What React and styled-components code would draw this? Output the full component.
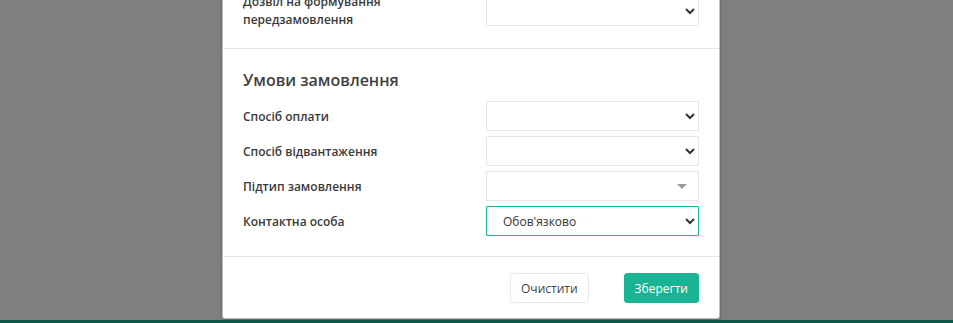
import React from 'react';
import styled, { createGlobalStyle } from 'styled-components';

const GlobalStyle = createGlobalStyle`
  html, body {
    margin: 0;
    padding: 0;
  }

  body {
    font-family: 'Open Sans', 'Liberation Sans', sans-serif;
    font-size: 12px;
    color: #333;
  }
`;

const conditionRows = [
  { label: 'Спосіб оплати', kind: 'select' },
  { label: 'Спосіб відвантаження', kind: 'select' },
  { label: 'Підтип замовлення', kind: 'picker' },
  { label: 'Контактна особа', kind: 'select', value: "Обов'язково", focused: true },
];

const App = () => (
  <>
    <GlobalStyle />
    <Page>
      <Stage>
        <Modal>
          <Section $pad="0 20px 19px">
            <Row>
              <Label>
                Дозвіл на формування
                <br />
                передзамовлення
              </Label>
              <Select defaultValue="">
                <option value="" />
              </Select>
            </Row>
          </Section>

          <Section $pad="21px 20px 20px">
            <Heading>Умови замовлення</Heading>
            <Rows>
              {conditionRows.map((row) => (
                <Row key={row.label}>
                  <Label $drop>{row.label}</Label>
                  {row.kind === 'picker' ? (
                    <Picker>
                      <Caret />
                    </Picker>
                  ) : (
                    <Select $focused={row.focused} defaultValue={row.value || ''}>
                      <option value={row.value || ''}>{row.value || ''}</option>
                    </Select>
                  )}
                </Row>
              ))}
            </Rows>
          </Section>

          <Footer>
            <Button>Очистити</Button>
            <Button $primary>Зберегти</Button>
          </Footer>
        </Modal>
      </Stage>
      <BottomBar />
    </Page>
  </>
);

const Page = styled.div`
  height: 100vh;
  display: flex;
  flex-direction: column;
  background: #7f7f7f;
  overflow: hidden;
`;

const Stage = styled.div`
  flex: 1;
  min-height: 0;
  display: flex;
  align-items: flex-end;
  padding-left: 222px;
  overflow: hidden;
`;

const Modal = styled.div`
  width: 498px;
  flex-shrink: 0;
  box-sizing: border-box;
  margin-bottom: 1px;
  background: #fff;
  border: 1px solid rgba(0, 0, 0, 0.25);
  border-radius: 0 0 3px 3px;
  box-shadow: 0 1px 3px rgba(0, 0, 0, 0.3);
`;

const Section = styled.div`
  padding: ${({ $pad }) => $pad};
  & + & {
    border-top: 1px solid #e5e5e5;
  }
`;

const Heading = styled.h4`
  margin: 0 0 11px;
  font-size: 16px;
  line-height: 20px;
  font-weight: 600;
  color: #404040;
`;

const Rows = styled.div`
  display: flex;
  flex-direction: column;
  gap: 5px;
`;

const Row = styled.div`
  display: grid;
  grid-template-columns: 1fr 213px;
  align-items: center;
`;

const Label = styled.div`
  padding-top: ${({ $drop }) => ($drop ? '2px' : '0')};
  font-size: 12px;
  line-height: 18px;
  font-weight: 600;
  color: #3a3a3a;
`;

const Select = styled.select`
  height: 30px;
  width: 100%;
  box-sizing: border-box;
  padding: 0 8px 0 12px;
  border: 1px solid ${({ $focused }) => ($focused ? '#1ab394' : '#e5e6e7')};
  border-radius: 1px;
  background: #fff;
  font-family: 'Open Sans', 'Liberation Sans', sans-serif;
  font-size: 12px;
  color: #333;
  outline: none;
`;

const Picker = styled.div`
  height: 30px;
  box-sizing: border-box;
  border: 1px solid #e5e6e7;
  background: #fff;
  display: flex;
  align-items: center;
  justify-content: flex-end;
  padding-right: 11px;
`;

const Caret = styled.span`
  width: 0;
  height: 0;
  border-left: 5px solid transparent;
  border-right: 5px solid transparent;
  border-top: 5px solid #999;
`;

const Footer = styled.div`
  display: flex;
  justify-content: flex-end;
  align-items: center;
  gap: 35px;
  padding: 16px 20px 15px;
  border-top: 1px solid #e5e5e5;
`;

const Button = styled.button`
  height: 30px;
  box-sizing: border-box;
  padding: 0 10px;
  border: 1px solid ${({ $primary }) => ($primary ? '#1ab394' : '#e7eaec')};
  border-radius: 3px;
  background: ${({ $primary }) => ($primary ? '#1ab394' : '#fff')};
  color: ${({ $primary }) => ($primary ? '#fff' : '#444')};
  font-family: 'Open Sans', 'Liberation Sans', sans-serif;
  font-size: 12px;
  cursor: pointer;
`;

const BottomBar = styled.div`
  height: 3px;
  flex-shrink: 0;
  background: #0e5648;
`;

export default App;
